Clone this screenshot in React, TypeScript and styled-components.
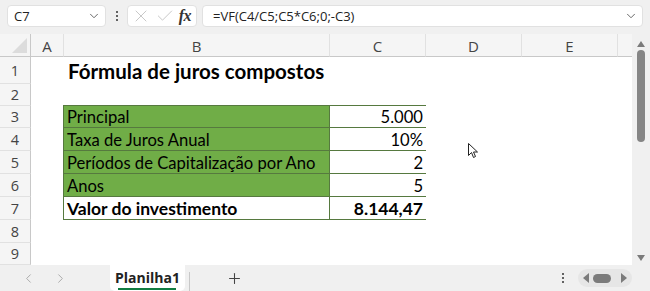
import { createGlobalStyle, styled } from 'styled-components';
import { Check, ChevronDown, ChevronLeft, ChevronRight, Plus, X } from 'lucide-react';

const GlobalStyle = createGlobalStyle`
  html, body { margin: 0; padding: 0; }
  body {
    width: 650px;
    height: 291px;
    overflow: hidden;
    background: #f0f0f0;
    font-family: 'Open Sans', 'Noto Sans', sans-serif;
  }
`;

const Shell = styled.div`
  width: 650px;
  height: 291px;
  display: flex;
  flex-direction: column;
  position: relative;
  background: #f0f0f0;
`;

/* formula bar */
const TopBar = styled.div`
  height: 34px;
  display: flex;
  align-items: flex-start;
  padding: 5px 7px 0 7px;
  box-sizing: border-box;
`;

const NameBox = styled.div`
  width: 99px;
  height: 22px;
  box-sizing: border-box;
  background: #fff;
  border: 1px solid #e1e1e1;
  border-radius: 4px;
  display: flex;
  align-items: center;
  justify-content: space-between;
  padding: 0 4px 0 6px;
  font-size: 13px;
  color: #222;
`;

const Dots = styled.div<{ $gap?: number }>`
  display: flex;
  flex-direction: column;
  gap: ${(p) => p.$gap ?? 2}px;
  align-items: center;
  justify-content: center;
  span {
    width: 2px;
    height: 2px;
    border-radius: 1px;
    background: #333;
  }
`;

const DotsSlot = styled.div`
  width: 21px;
  height: 22px;
  display: flex;
  justify-content: center;
`;

const IconBox = styled.div`
  width: 70px;
  height: 22px;
  box-sizing: border-box;
  background: #fff;
  border: 1px solid #e1e1e1;
  border-radius: 4px;
  display: flex;
  align-items: center;
  justify-content: space-between;
  padding: 0 3px 0 3px;
  color: #bdbdbd;
`;

const Fx = styled.span`
  font-family: 'Liberation Serif', serif;
  font-style: italic;
  font-weight: bold;
  font-size: 16px;
  color: #333;
  letter-spacing: -0.5px;
  margin-right: 2px;
`;

const FormulaBox = styled.div`
  flex: 1;
  margin-left: 5px;
  height: 22px;
  box-sizing: border-box;
  background: #fff;
  border: 1px solid #e1e1e1;
  border-radius: 4px;
  display: flex;
  align-items: center;
  justify-content: space-between;
  padding: 0 4px 0 10px;
  font-size: 13px;
  color: #222;
`;

/* sheet */
const SheetArea = styled.div`
  display: flex;
  height: 231px;
`;

const Grid = styled.div`
  width: 632px;
  display: grid;
  grid-template-columns: 31px 33px 266px 96px 96px 96px 14px;
  grid-template-rows: 23px 27px 22px 22px 23px 23px 23px 23px 23px 22px;
  background: #fff;
  overflow: hidden;
`;

const ColHead = styled.div<{ $last?: boolean }>`
  grid-row: 1;
  background: #f5f5f5;
  border-bottom: 1px solid #c8c8c8;
  border-right: ${(p) => (p.$last ? 'none' : '1px solid #e1e1e1')};
  display: flex;
  align-items: center;
  justify-content: center;
  font-size: 15px;
  color: #444;
  padding-top: 1px;
`;

const Corner = styled.div`
  grid-row: 1;
  grid-column: 1;
  background: #f5f5f5;
  border-bottom: 1px solid #c8c8c8;
  border-right: 1px solid #c8c8c8;
  position: relative;
  &::after {
    content: '';
    position: absolute;
    right: 3px;
    bottom: 3px;
    border-style: solid;
    border-width: 0 0 15px 15px;
    border-color: transparent transparent #dcdcdc transparent;
  }
`;

const RowHead = styled.div<{ $row: number }>`
  grid-column: 1;
  grid-row: ${(p) => p.$row};
  background: #f5f5f5;
  border-right: 1px solid #c8c8c8;
  border-bottom: 1px solid #e1e1e1;
  display: flex;
  align-items: center;
  justify-content: center;
  font-size: 14.5px;
  color: #444;
`;

const Title = styled.div`
  grid-row: 2;
  grid-column: 3 / 7;
  display: flex;
  align-items: center;
  padding: 1px 0 0 4px;
  font-family: Lato, 'Liberation Sans', sans-serif;
  font-weight: 700;
  font-size: 20.5px;
  color: #000;
`;

const Table = styled.div`
  grid-column: 3 / 5;
  grid-row: 4 / 9;
  display: grid;
  grid-template-columns: 265px 96px;
  grid-template-rows: 21px 22px 22px 22px 22px;
  gap: 1px;
  padding: 1px;
  margin-left: -1px;
  margin-top: -1px;
  background: #56793f;
`;

const Cell = styled.div<{ $fill?: boolean; $bold?: boolean; $right?: boolean }>`
  background: ${(p) => (p.$fill ? '#70ad47' : '#fff')};
  font-family: Lato, 'Liberation Sans', sans-serif;
  font-size: ${(p) => (p.$bold ? 17.5 : 16.6)}px;
  font-weight: ${(p) => (p.$bold ? 700 : 400)};
  color: #000;
  display: flex;
  align-items: center;
  justify-content: ${(p) => (p.$right ? 'flex-end' : 'flex-start')};
  padding: 1px 3px 0 3px;
  white-space: nowrap;
`;

const VScroll = styled.div`
  width: 18px;
  display: flex;
  flex-direction: column;
  align-items: center;
  padding: 7px 0 4px;
  box-sizing: border-box;
`;

const ArrowUp = styled.div`
  width: 0;
  height: 0;
  border-left: 4px solid transparent;
  border-right: 4px solid transparent;
  border-bottom: 6px solid #7b7b7b;
`;

const ArrowDown = styled(ArrowUp)`
  border-bottom: none;
  border-top: 6px solid #7b7b7b;
  margin-top: auto;
`;

const Thumb = styled.div`
  margin-top: 3px;
  width: 8px;
  height: 92px;
  border-radius: 4px;
  background: #858585;
`;

/* sheet tabs */
const TabBar = styled.div`
  flex: 1;
  display: flex;
  align-items: stretch;
  color: #a6a6a6;
`;

const NavArrows = styled.div`
  width: 110px;
  display: flex;
  align-items: center;
  gap: 17px;
  padding-left: 21px;
  box-sizing: border-box;
`;

const SheetTab = styled.div`
  width: 75px;
  background: #fff;
  border-radius: 0 0 5px 5px;
  position: relative;
  display: flex;
  align-items: center;
  justify-content: center;
  font-size: 14px;
  font-weight: 700;
  color: #222;
  padding-bottom: 1px;
  &::after {
    content: '';
    position: absolute;
    left: 8px;
    right: 9px;
    bottom: 1px;
    height: 2px;
    background: #107c41;
  }
`;

const TabDivider = styled.div`
  width: 1px;
  margin: 7px 0 0 4px;
  background: #c8c8c8;
`;

const AddSheet = styled.div`
  width: 88px;
  display: flex;
  align-items: center;
  justify-content: center;
  color: #444;
`;

const TabRight = styled.div`
  flex: 1;
  display: flex;
  align-items: center;
  justify-content: flex-end;
  padding-right: 18px;
  gap: 14px;
`;

const HNav = styled.div`
  width: 54px;
  height: 18px;
  border-radius: 9px;
  background: #e6e6e6;
  display: flex;
  align-items: center;
  justify-content: center;
  gap: 4px;
`;

const TriLeft = styled.div`
  width: 0;
  height: 0;
  border-top: 5px solid transparent;
  border-bottom: 5px solid transparent;
  border-right: 6px solid #7b7b7b;
`;

const TriRight = styled(TriLeft)`
  border-right: none;
  border-left: 6px solid #7b7b7b;
  margin-left: 6px;
`;

const HThumb = styled.div`
  width: 18px;
  height: 9px;
  border-radius: 5px;
  background: #7b7b7b;
`;

const Pointer = styled.svg`
  position: absolute;
  left: 468px;
  top: 143px;
`;

const cols = ['A', 'B', 'C', 'D', 'E', ''];

const rows: { label: string; value: string; fill: boolean; bold?: boolean }[] = [
  { label: 'Principal', value: '5.000', fill: true },
  { label: 'Taxa de Juros Anual', value: '10%', fill: true },
  { label: 'Períodos de Capitalização por Ano', value: '2', fill: true },
  { label: 'Anos', value: '5', fill: true },
  { label: 'Valor do investimento', value: '8.144,47', fill: false, bold: true },
];

const ThreeDots = ({ gap }: { gap?: number }) => (
  <Dots $gap={gap}>
    <span />
    <span />
    <span />
  </Dots>
);

const App = () => {
  return (
    <Shell>
      <GlobalStyle />
      <TopBar>
        <NameBox>
          <span>C7</span>
          <ChevronDown size={14} strokeWidth={1.5} color="#555" />
        </NameBox>
        <DotsSlot>
          <ThreeDots gap={2} />
        </DotsSlot>
        <IconBox>
          <X size={20} strokeWidth={1} />
          <Check size={20} strokeWidth={1} />
          <Fx>fx</Fx>
        </IconBox>
        <FormulaBox>
          <span>=VF(C4/C5;C5*C6;0;-C3)</span>
          <ChevronDown size={14} strokeWidth={1.5} color="#555" />
        </FormulaBox>
      </TopBar>

      <SheetArea>
        <Grid>
          <Corner />
          {cols.map((c, i) => (
            <ColHead key={i} $last={i === cols.length - 1} style={{ gridColumn: i + 2 }}>
              {c}
            </ColHead>
          ))}
          {[1, 2, 3, 4, 5, 6, 7, 8, 9].map((n) => (
            <RowHead key={n} $row={n + 1}>
              {n}
            </RowHead>
          ))}
          <Title>Fórmula de juros compostos</Title>
          <Table>
            {rows.map((r) => [
              <Cell key={r.label} $fill={r.fill} $bold={r.bold}>
                {r.label}
              </Cell>,
              <Cell key={r.label + '-v'} $right $bold={r.bold}>
                {r.value}
              </Cell>,
            ])}
          </Table>
        </Grid>
        <VScroll>
          <ArrowUp />
          <Thumb />
          <ArrowDown />
        </VScroll>
      </SheetArea>

      <TabBar>
        <NavArrows>
          <ChevronLeft size={15} strokeWidth={1.5} />
          <ChevronRight size={15} strokeWidth={1.5} />
        </NavArrows>
        <SheetTab>Planilha1</SheetTab>
        <TabDivider />
        <AddSheet>
          <Plus size={17} strokeWidth={1.5} />
        </AddSheet>
        <TabRight>
          <ThreeDots gap={2} />
          <HNav>
            <TriLeft />
            <HThumb />
            <TriRight />
          </HNav>
        </TabRight>
      </TabBar>

      <Pointer width="12" height="16" viewBox="0 0 12 16">
        <path d="M0.5 0.5 L0.5 12.5 L3.5 9.5 L5.5 14.5 L7.5 13.5 L5.5 9 L9.5 9 Z" fill="#fff" stroke="#222" strokeWidth="1" strokeLinejoin="round" />
      </Pointer>
    </Shell>
  );
};

export default App;
